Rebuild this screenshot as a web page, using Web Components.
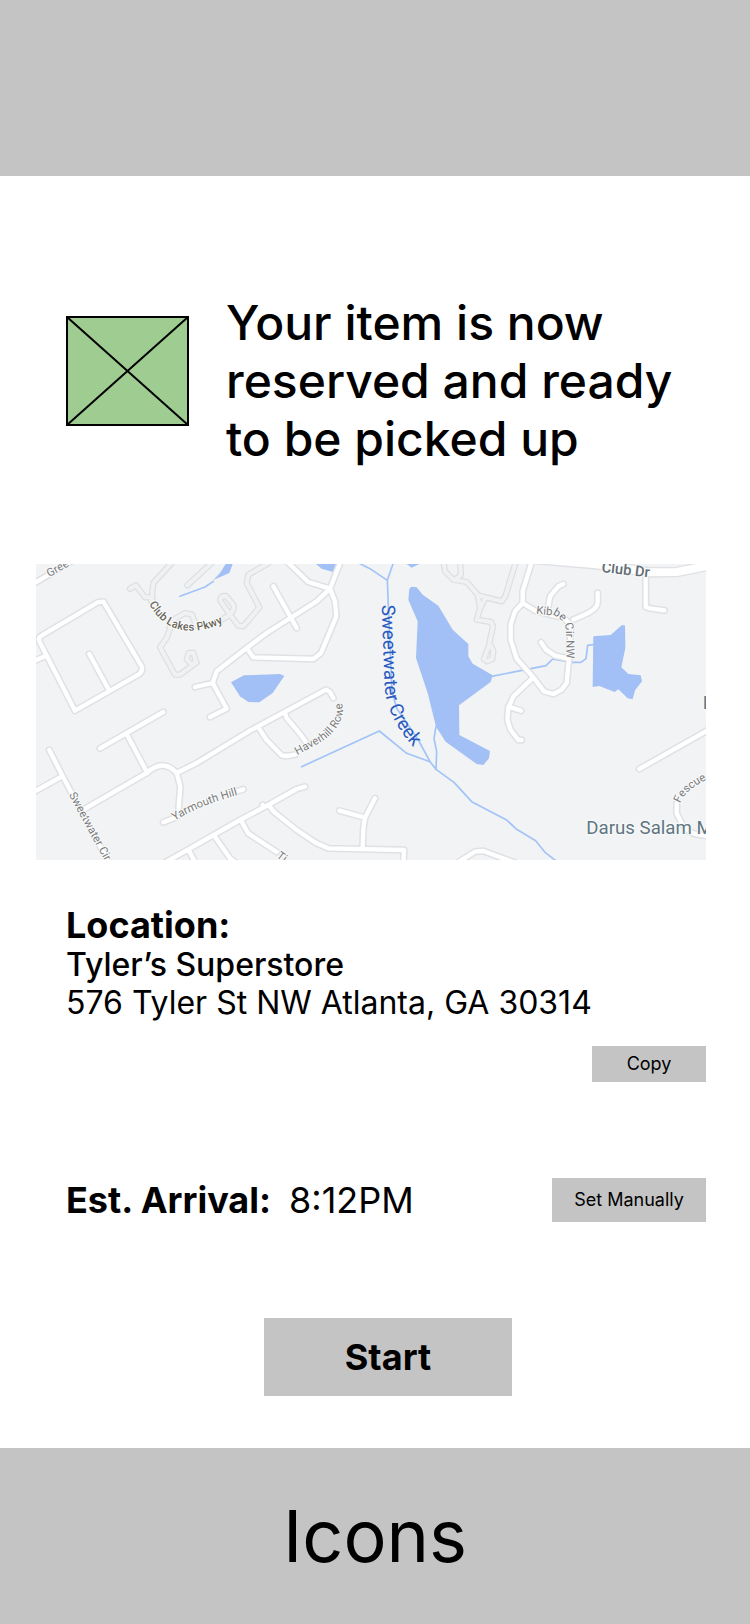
<!DOCTYPE html>
<html lang="en">
<head>
<meta charset="utf-8">
<meta name="viewport" content="width=device-width, initial-scale=1">
<title>Item reserved</title>
<style>
  body { margin: 0; background: #fff; color: #000; font-family: Inter, "Liberation Sans", sans-serif; }
</style>
</head>
<body>
<pickup-page>
  <pickup-notice slot="notice">Your item is now reserved and ready to be picked up</pickup-notice>
  <area-map slot="map"></area-map>
  <store-location slot="details">
    <span slot="name">Tyler’s Superstore</span>
    <span slot="address">576 Tyler St NW Atlanta, GA 30314</span>
  </store-location>
  <arrival-time slot="details">8:12PM</arrival-time>
  <grey-button slot="action" size="large">Start</grey-button>
  <span slot="footer">Icons</span>
</pickup-page>

<template id="pickup-page">
  <style>
    :host { display: flex; flex-direction: column; min-height: 100vh; }
    header { height: 176px; background: #c4c4c4; }
    main { flex: 1; display: flex; flex-direction: column; }
    .notice { padding: 118px 44px 96px 66px; }
    .map { padding: 0 44px 0 36px; }
    .details { padding: 44px 44px 0 66px; display: flex; flex-direction: column; gap: 96px; }
    .action { padding: 96px 44px 52px 70px; display: flex; justify-content: center; }
    footer { min-height: 176px; background: #c4c4c4; display: flex; align-items: center; justify-content: center; font-size: 72px; line-height: 88px; }
  </style>
  <header></header>
  <main>
    <div class="notice"><slot name="notice"></slot></div>
    <div class="map"><slot name="map"></slot></div>
    <div class="details"><slot name="details"></slot></div>
    <div class="action"><slot name="action"></slot></div>
  </main>
  <footer><slot name="footer"></slot></footer>
</template>

<template id="pickup-notice">
  <style>
    :host { display: flex; align-items: flex-start; gap: 36px; }
    svg { flex: none; width: 124px; height: 110px; padding-top: 22px; }
    h1 { margin: 0; font-size: 48px; line-height: 58px; font-weight: 500; }
  </style>
  <svg viewBox="0 0 124 110" aria-hidden="true">
    <rect x="1" y="1" width="121" height="108" fill="#9fcc91" stroke="#000" stroke-width="2"/>
    <path d="M1 1L122 109M122 1L1 109" stroke="#000" stroke-width="2"/>
  </svg>
  <h1><slot></slot></h1>
</template>

<template id="store-location">
  <style>
    :host { display: flex; flex-direction: column; }
    h2 { margin: 0; font-size: 36px; line-height: 42px; font-weight: 700; }
    p { margin: 0; font-size: 32px; line-height: 38px; }
    .name { font-weight: 500; }
    grey-button { align-self: flex-end; margin-top: 24px; }
  </style>
  <h2>Location:</h2>
  <p class="name"><slot name="name"></slot></p>
  <p><slot name="address"></slot></p>
  <grey-button size="small">Copy</grey-button>
</template>

<template id="arrival-time">
  <style>
    :host { display: flex; align-items: center; gap: 18px; font-size: 36px; line-height: 44px; }
    h2 { margin: 0; font-size: 36px; font-weight: 700; }
    grey-button { margin-left: auto; }
  </style>
  <h2>Est. Arrival:</h2>
  <span><slot></slot></span>
  <grey-button size="medium">Set Manually</grey-button>
</template>

<template id="grey-button">
  <style>
    :host { display: block; }
    button { display: block; border: 0; margin: 0; padding: 7px 22px; background: #c4c4c4; color: #000; font: 400 18px/22px Inter, "Liberation Sans", sans-serif; min-width: 114px; cursor: pointer; }
    :host([size="medium"]) button { padding: 11px 22px; min-width: 154px; }
    :host([size="large"]) button { padding: 17px 22px; min-width: 248px; font-size: 36px; line-height: 44px; font-weight: 700; }
  </style>
  <button type="button"><slot></slot></button>
</template>

<template id="area-map">
  <style>
    :host { display: block; }
    svg { display: block; width: 100%; height: auto; background: #f1f3f4; font-family: Roboto, "Liberation Sans", sans-serif; }
    path { fill: none; stroke-linecap: round; stroke-linejoin: round; }
    .casing { stroke: #dfe1e4; stroke-width: 22px; }
    .fill { stroke: #fff; stroke-width: 13px; }
    .lane-casing { stroke: #dcdee0; stroke-width: 19px; }
    .lane-fill { stroke: #f0f1f3; stroke-width: 12px; }
    .water path { fill: #a2c0f5; }
    .stream { stroke: #a2c3f8; stroke-width: 5px; }
    text { paint-order: stroke; stroke: #f8f9fa; stroke-width: 7px; stroke-linejoin: round; fill: #7c7c7c; font-size: 34px; font-weight: 400; }
    text.park { fill: #6a675a; font-weight: 500; }
    text.creek { fill: #2859bf; font-size: 56px; stroke: none; }
    text.drive { fill: #606c72; font-size: 44px; font-weight: 500; }
    text.place { fill: #5f7681; font-size: 56px; }
  </style>
  <svg viewBox="18 18 2010 888" role="img" aria-label="Map of the area around Sweetwater Creek">
    <defs>
      <g id="lanes">
        <path d="M300 92L318 82L345 118H368M425 15L370 75L364 130M472 82L545 15"/>
        <path d="M715 16L655 50L650 75L688 148L640 205L625 203L600 170L572 130Q568 112 588 114L611 142Q614 160 598 166M600 170L575 185"/>
        <path d="M418 210L435 182L465 165L486 170L497 200M425 200L410 240L390 268L435 350H450L500 313L482 317L470 303L476 285L490 284L498 310"/>
        <path d="M1240 10L1245 40L1270 65L1310 72L1345 112L1415 130L1426 115L1458 10M1290 10L1293 50L1275 65M1344 112L1350 153L1366 120M1350 153L1340 185L1383 192L1389 205L1378 255L1390 278L1387 303L1372 310L1362 303L1378 260"/>
      </g>
      <g id="roads">
        <path d="M0 83L60 48L150 -5M135 458L28 250Q24 238 36 232L203 133L220 131L335 325Q340 340 325 350ZM10 310L45 295M178 288L238 398"/>
        <path d="M210 571L400 462M290 528L352 645M160 755L350 645Q400 600 440 645L451 685L445 760M440 645L500 615L660 518L888 395L900 402L910 420M795 590L770 594L755 592L710 546L685 508M765 466L770 480L812 530L830 555"/>
        <path d="M495 387L548 375L560 340L650 270L710 225L860 130L900 92L932 10M770 10L835 72L900 92L915 130L919 175L873 285L850 303L670 298L650 270M548 375L590 452L540 477M730 85L800 210"/>
        <path d="M58 576L98 655L240 920M98 654L10 703M400 793L440 777M615 702L640 694"/>
        <path d="M390 922L475 874L630 786L720 738L800 693L825 686M698 741V748M475 874L495 912M555 836L600 901L615 912M635 791L655 826L740 882M720 746L730 760L800 816L860 856L895 871L1122 876L1120 920M998 871L1000 811L1005 779L1035 721M928 758L1005 779M1285 912L1335 881L1360 879L1455 914"/>
        <path d="M1503 18L1478 100V135L1455 160L1442 200V245L1460 302L1510 358L1542 400L1570 408L1595 395L1610 375L1618 290L1623 200L1600 180L1515 158L1478 135M1555 145L1560 115L1585 85L1600 78M1630 185L1675 165Q1703 150 1703 133V105M1617 302L1575 293L1548 275L1533 253M1510 358L1450 415L1435 450L1432 486L1442 516L1465 546H1475M1435 446L1473 458"/>
        <path d="M1847 55V147L1860 151L1903 157M1828 633L2045 510M1940 736V766L1955 796Q1975 825 2000 829L2045 836"/>
      </g>
      <path id="p-green" d="M58 58L180 -12"/>
      <path id="p-lakes" d="M357 138Q400 214 475 218Q540 222 620 172"/>
      <path id="p-creek" d="M1055 141L1064 390Q1072 490 1175 594"/>
      <path id="p-kibbe" d="M1518 167L1575 173Q1605 190 1608 215L1610 320"/>
      <path id="p-club" d="M1714 42L1900 63"/>
      <path id="p-haverhill" d="M802 592L880 548Q932 510 939 460Q938 430 915 380"/>
      <path id="p-yarmouth" d="M434 788Q520 735 660 702"/>
      <path id="p-circle" d="M116 710L270 992"/>
      <path id="p-fescue" d="M1951 736Q1965 688 2080 642"/>
      <path id="p-ti" d="M738 897L820 957"/>
    </defs>

    <use href="#lanes" class="lane-casing"/>
    <use href="#lanes" class="lane-fill"/>

    <g class="water">
      <path d="M550 66L570 45L587 18H608L598 45Z"/>
      <path d="M858 18L875 32L910 42L918 18ZM1130 18L1145 29L1168 18Z"/>
      <path d="M603 373L642 352L750 348L763 354L728 405L688 433L655 432L630 415Z"/>
      <path d="M1138 92L1145 86L1160 88L1178 110L1225 143L1268 215L1315 258V295L1328 317L1388 352L1382 372L1287 442L1288 531L1380 579L1377 601L1360 621L1340 618L1247 551L1218 506L1202 441L1193 405L1158 300L1163 190L1135 125Z"/>
      <path d="M1690 235L1742 231L1775 202H1785L1786 270L1774 328L1795 348L1832 352L1836 370L1815 397L1808 424L1793 421L1765 394L1754 402L1708 384L1688 387Z"/>
    </g>
    <g class="stream">
      <path d="M450 115L525 87L550 70"/>
      <path d="M980 12L1020 32L1072 67L1090 15M1072 67L1075 145L1086 400L1100 451L1165 546L1200 611L1218 634L1272 673L1325 731L1430 786L1460 814L1517 848L1545 883L1580 910"/>
      <path d="M815 626L1048 519L1130 586L1200 611M1218 506L1212 541L1220 581L1218 634"/>
      <path d="M1385 355L1548 323L1568 303L1625 313H1653L1668 302L1673 262L1690 260"/>
    </g>

    <use href="#roads" class="casing"/>
    <path d="M1480 0L1700 19L1860 43L1940 42L2050 20" stroke="#dfe1e4" stroke-width="32"/>
    <use href="#roads" class="fill"/>
    <path d="M1480 0L1700 19L1860 43L1940 42L2050 20" stroke="#fff" stroke-width="24"/>

    <text><textPath href="#p-green">Gree</textPath></text>
    <text class="park"><textPath href="#p-lakes">Club Lakes Pkwy</textPath></text>
    <text class="creek"><textPath href="#p-creek">Sweetwater Creek</textPath></text>
    <text><textPath href="#p-kibbe">Kibbe Cir NW</textPath></text>
    <text class="drive"><textPath href="#p-club">Club Dr</textPath></text>
    <text><textPath href="#p-haverhill">Haverhill Rowe</textPath></text>
    <text><textPath href="#p-yarmouth">Yarmouth Hill</textPath></text>
    <text><textPath href="#p-circle">Sweetwater Cir</textPath></text>
    <text><textPath href="#p-fescue">Fescue</textPath></text>
    <text><textPath href="#p-ti">Ti</textPath></text>
    <text class="place" x="1669" y="828">Darus Salam M</text>
    <text class="place" x="2018" y="453">L</text>
  </svg>
</template>

<script>
  function define(name) {
    const template = document.getElementById(name);
    customElements.define(name, class extends HTMLElement {
      constructor() {
        super();
        this.attachShadow({ mode: "open" }).append(template.content.cloneNode(true));
      }
    });
  }
  ["grey-button", "area-map", "pickup-notice", "store-location", "arrival-time", "pickup-page"].forEach(define);
</script>
</body>
</html>
